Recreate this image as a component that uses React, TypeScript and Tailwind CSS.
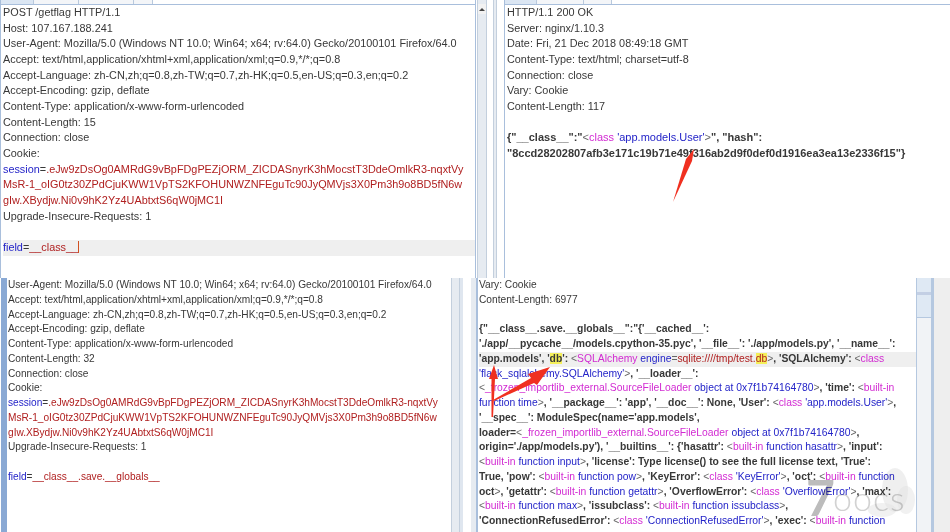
const font = "font-['Liberation_Sans',Arial,sans-serif]";

const Blue = ({ children }: { children: React.ReactNode }) => <span className="text-[#2323c8]">{children}</span>;
const Red = ({ children }: { children: React.ReactNode }) => <span className="text-[#b02020]">{children}</span>;
const Pink = ({ children }: { children: React.ReactNode }) => <span className="text-[#d22ad2] font-normal">{children}</span>;
const Code = ({ children }: { children: React.ReactNode }) => <span className="text-[#2323c8] font-normal">{children}</span>;
const Tag = ({ children }: { children: React.ReactNode }) => <span className="text-[#666] font-normal">{children}</span>;
const Sq = ({ children }: { children: React.ReactNode }) => <span className="text-[#b02020] font-normal">{children}</span>;
const Mark = ({ children }: { children: React.ReactNode }) => <span className="bg-[#f5f05a]">{children}</span>;

const Line = ({ children, className = "" }: { children?: React.ReactNode; className?: string }) => (
  <div className={`h-[1lh] whitespace-nowrap ${className}`}>{children}</div>
);

const Scrollbar = ({ className = "", arrow = false }: { className?: string; arrow?: boolean }) => (
  <div className={`flex flex-col items-center bg-[#e6ebf1] border-x border-[#c3cfdd] ${className}`}>
    {arrow && (
      <div className="w-full h-[10px] mt-[4px] bg-[#f2f2f2] flex items-center justify-center">
        <div className="w-0 h-0 border-x-[3px] border-x-transparent border-b-[3px] border-b-[#444]" />
      </div>
    )}
  </div>
);

const Tabs = ({ widths }: { widths: string[] }) => (
  <div className="flex h-[5px] bg-white border-b border-[#a9bfdc]">
    {widths.map((w, i) => (
      <div key={i} className={`${w} border-r border-[#b9c9dd] ${i === 0 ? "bg-[#dbe6f3]" : "bg-[#f3f5f8]"}`} />
    ))}
  </div>
);

function TopLeft() {
  return (
    <div className="flex w-[504px] shrink-0">
      <div className="w-[476px] flex flex-col border-l border-[#a9bfdc] border-r">
        <Tabs widths={["w-[33px]", "w-[45px]", "w-[55px]", "w-[19px]"]} />
        <div className="flex-1 bg-white pl-[2px] text-[10.85px] leading-[15.67px] text-[#383838]">
          <Line>POST /getflag HTTP/1.1</Line>
          <Line>Host: 107.167.188.241</Line>
          <Line>User-Agent: Mozilla/5.0 (Windows NT 10.0; Win64; x64; rv:64.0) Gecko/20100101 Firefox/64.0</Line>
          <Line>Accept: text/html,application/xhtml+xml,application/xml;q=0.9,*/*;q=0.8</Line>
          <Line>Accept-Language: zh-CN,zh;q=0.8,zh-TW;q=0.7,zh-HK;q=0.5,en-US;q=0.3,en;q=0.2</Line>
          <Line>Accept-Encoding: gzip, deflate</Line>
          <Line>Content-Type: application/x-www-form-urlencoded</Line>
          <Line>Content-Length: 15</Line>
          <Line>Connection: close</Line>
          <Line>Cookie:</Line>
          <Line><Blue>session</Blue>=<Red>.eJw9zDsOg0AMRdG9vBpFDgPEZjORM_ZICDASnyrK3hMocstT3DdeOmlkR3-nqxtVy</Red></Line>
          <Line><Red>MsR-1_oIG0tz30ZPdCjuKWW1VpTS2KFOHUNWZNFEguTc90JyQMVjs3X0Pm3h9o8BD5fN6w</Red></Line>
          <Line><Red>gIw.XBydjw.Ni0v9hK2Yz4UAbtxtS6qW0jMC1I</Red></Line>
          <Line>Upgrade-Insecure-Requests: 1</Line>
          <Line />
          <Line className="bg-[#efefef]"><Blue>field</Blue>=<Red>__class__</Red><span className="border-r border-[#d05020]" /></Line>
        </div>
      </div>
      <Scrollbar className="w-[10px] ml-[1px]" arrow />
      <div className="w-[6px] bg-white" />
      <Scrollbar className="w-[4px]" />
      <div className="flex-1 bg-white" />
    </div>
  );
}

function TopRight() {
  return (
    <div className="flex-1 flex flex-col border-l border-[#a9bfdc]">
      <Tabs widths={["w-[32px]", "w-[47px]", "w-[28px]"]} />
      <div className="flex-1 bg-white pl-[2px] text-[10.85px] leading-[15.67px] text-[#383838]">
        <Line>HTTP/1.1 200 OK</Line>
        <Line>Server: nginx/1.10.3</Line>
        <Line>Date: Fri, 21 Dec 2018 08:49:18 GMT</Line>
        <Line>Content-Type: text/html; charset=utf-8</Line>
        <Line>Connection: close</Line>
        <Line>Vary: Cookie</Line>
        <Line>Content-Length: 117</Line>
        <Line />
        <Line className="font-bold text-[11px]">{'{"__class__":"'}<Tag>&lt;</Tag><Pink>class</Pink> <Code>'app.models.User'</Code><Tag>&gt;</Tag>{'", "hash":'}</Line>
        <Line className="font-bold text-[11px]">"8ccd28202807afb3e171c19b71e49f316ab2d9f0def0d1916ea3ea13e2336f15"{'}'}</Line>
      </div>
    </div>
  );
}

function BottomLeft() {
  return (
    <div className="flex w-[476px] shrink-0">
      <div className="w-[7px] border-l border-white bg-[#8aa9d4]" />
      <div className="w-[444px] bg-white text-[10.15px] leading-[14.75px] text-[#383838] pl-[1px]">
        <Line>User-Agent: Mozilla/5.0 (Windows NT 10.0; Win64; x64; rv:64.0) Gecko/20100101 Firefox/64.0</Line>
        <Line>Accept: text/html,application/xhtml+xml,application/xml;q=0.9,*/*;q=0.8</Line>
        <Line>Accept-Language: zh-CN,zh;q=0.8,zh-TW;q=0.7,zh-HK;q=0.5,en-US;q=0.3,en;q=0.2</Line>
        <Line>Accept-Encoding: gzip, deflate</Line>
        <Line>Content-Type: application/x-www-form-urlencoded</Line>
        <Line>Content-Length: 32</Line>
        <Line>Connection: close</Line>
        <Line>Cookie:</Line>
        <Line><Blue>session</Blue>=<Red>.eJw9zDsOg0AMRdG9vBpFDgPEZjORM_ZICDASnyrK3hMocstT3DdeOmlkR3-nqxtVy</Red></Line>
        <Line><Red>MsR-1_oIG0tz30ZPdCjuKWW1VpTS2KFOHUNWZNFEguTc90JyQMVjs3X0Pm3h9o8BD5fN6w</Red></Line>
        <Line><Red>gIw.XBydjw.Ni0v9hK2Yz4UAbtxtS6qW0jMC1I</Red></Line>
        <Line>Upgrade-Insecure-Requests: 1</Line>
        <Line />
        <Line><Blue>field</Blue>=<Red>__class__.save.__globals__</Red></Line>
      </div>
      <Scrollbar className="w-[9px]" />
      <div className="w-[3px] bg-[#dfe6ef]" />
      <div className="w-[8px] bg-white" />
      <div className="flex-1 bg-[#e6ebf1]" />
    </div>
  );
}

function BottomRight() {
  return (
    <div className="flex flex-1">
      <div className="w-[2px] bg-[#a9bfdc]" />
      <div className="w-[438px] bg-white text-[10.2px] leading-[14.75px] text-[#383838]">
        <div className="pl-[1px]">
          <Line>Vary: Cookie</Line>
          <Line>Content-Length: 6977</Line>
          <Line />
        </div>
        <div className="pl-[1px] font-bold text-[10.35px]">
          <Line>{`{"__class__.save.__globals__":"{'__cached__':`}</Line>
          <Line>'./app/__pycache__/models.cpython-35.pyc', '__file__': './app/models.py', '__name__':</Line>
          <Line className="bg-[#efefef]">'app.models', '<Mark>db</Mark>': <Tag>&lt;</Tag><Pink>SQLAlchemy</Pink> <Code>engine</Code><Tag>=</Tag><Sq>sqlite:////tmp/test.<Mark>db</Mark></Sq><Tag>&gt;</Tag>, 'SQLAlchemy': <Tag>&lt;</Tag><Pink>class</Pink></Line>
          <Line><Code>'flask_sqlalchemy.SQLAlchemy'</Code><Tag>&gt;</Tag>, '__loader__':</Line>
          <Line><Tag>&lt;</Tag><Pink>_frozen_importlib_external.SourceFileLoader</Pink> <Code>object at 0x7f1b74164780</Code><Tag>&gt;</Tag>, 'time': <Tag>&lt;</Tag><Pink>built-in</Pink></Line>
          <Line><Code>function time</Code><Tag>&gt;</Tag>, '__package__': 'app', '__doc__': None, 'User': <Tag>&lt;</Tag><Pink>class</Pink> <Code>'app.models.User'</Code><Tag>&gt;</Tag>,</Line>
          <Line>'__spec__': ModuleSpec(name='app.models',</Line>
          <Line>loader=<Tag>&lt;</Tag><Pink>_frozen_importlib_external.SourceFileLoader</Pink> <Code>object at 0x7f1b74164780</Code><Tag>&gt;</Tag>,</Line>
          <Line>origin='./app/models.py'), '__builtins__': {`{'hasattr'`}: <Tag>&lt;</Tag><Pink>built-in</Pink> <Code>function hasattr</Code><Tag>&gt;</Tag>, 'input':</Line>
          <Line><Tag>&lt;</Tag><Pink>built-in</Pink> <Code>function input</Code><Tag>&gt;</Tag>, 'license': Type license() to see the full license text, 'True':</Line>
          <Line>True, 'pow': <Tag>&lt;</Tag><Pink>built-in</Pink> <Code>function pow</Code><Tag>&gt;</Tag>, 'KeyError': <Tag>&lt;</Tag><Pink>class</Pink> <Code>'KeyError'</Code><Tag>&gt;</Tag>, 'oct': <Tag>&lt;</Tag><Pink>built-in</Pink> <Code>function</Code></Line>
          <Line>oct<Tag>&gt;</Tag>, 'getattr': <Tag>&lt;</Tag><Pink>built-in</Pink> <Code>function getattr</Code><Tag>&gt;</Tag>, 'OverflowError': <Tag>&lt;</Tag><Pink>class</Pink> <Code>'OverflowError'</Code><Tag>&gt;</Tag>, 'max':</Line>
          <Line><Tag>&lt;</Tag><Pink>built-in</Pink> <Code>function max</Code><Tag>&gt;</Tag>, 'issubclass': <Tag>&lt;</Tag><Pink>built-in</Pink> <Code>function issubclass</Code><Tag>&gt;</Tag>,</Line>
          <Line>'ConnectionRefusedError': <Tag>&lt;</Tag><Pink>class</Pink> <Code>'ConnectionRefusedError'</Code><Tag>&gt;</Tag>, 'exec': <Tag>&lt;</Tag><Pink>built-in</Pink> <Code>function</Code></Line>
        </div>
      </div>
      <div className="w-[16px] flex flex-col border-x border-[#b5c8e0]">
        <div className="h-[40px] bg-[#dfe9f4] border-b border-[#b5c8e0] pt-[14px]">
          <div className="h-[3px] bg-[#c3cfe4]" />
        </div>
        <div className="flex-1 bg-[#f1f3f6]" />
      </div>
      <div className="w-[2px] bg-[#b5c8e0]" />
      <div className="flex-1 bg-[#eeeeee]" />
    </div>
  );
}

function Arrows() {
  return (
    <svg className="absolute left-0 top-0 pointer-events-none" width="950" height="532" viewBox="0 0 950 532">
      <polygon points="694,149 686,159 673,202 692,161" fill="#f03020" />
      <polygon points="494,365 489,379 491.5,379 491.5,417 493,417 495,379 498,379" fill="#f03020" />
      <polygon points="550,367 528,374 531,378 493,400 494,401 534,383 537,385" fill="#f03020" />
    </svg>
  );
}

function Watermark() {
  return (
    <>
      <svg className="absolute left-0 top-0 pointer-events-none mix-blend-multiply" width="950" height="532" viewBox="0 0 950 532">
        <g fill="#e4e4e4">
          <ellipse cx="895" cy="490" rx="13" ry="22" opacity="0.6" />
          <ellipse cx="906" cy="500" rx="9" ry="14" opacity="0.5" />
          <ellipse cx="882" cy="510" rx="14" ry="7" opacity="0.5" />
        </g>
      </svg>
      <div className="absolute left-[806px] top-[472px] flex items-end leading-none font-['Lato',sans-serif] pointer-events-none mix-blend-multiply">
        <span className="text-[50px] font-bold text-[#bcbcbc]">7</span>
        <span className="text-[34px] font-light text-[#d2d2d2] tracking-[1px] mb-[7px] -ml-[2px]">oocs</span>
      </div>
    </>
  );
}

export default function App() {
  return (
    <div className={`relative w-[950px] h-[532px] overflow-hidden bg-white ${font}`}>
      <div className="blur-[0.45px]">
        <div className="flex h-[278px]">
          <TopLeft />
          <TopRight />
        </div>
        <div className="flex h-[254px]">
          <BottomLeft />
          <BottomRight />
        </div>
      </div>
      <Arrows />
      <Watermark />
    </div>
  );
}
